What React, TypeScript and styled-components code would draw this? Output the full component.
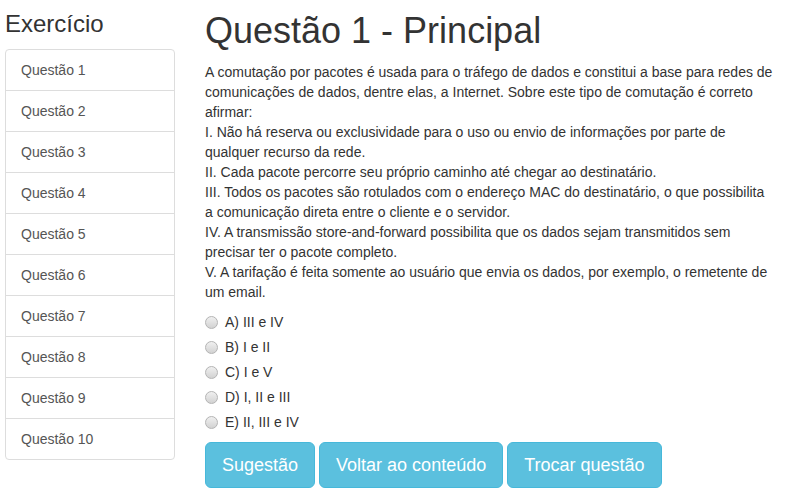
import styled, { createGlobalStyle } from "styled-components"

const GlobalStyle = createGlobalStyle`
  html, body {
    margin: 0;
    padding: 0;
    background: #fff;
  }
  body {
    font-family: 'Liberation Sans', Arial, sans-serif;
    font-size: 14px;
    line-height: 20px;
    color: #333;
  }
  * { box-sizing: border-box; }
`

const questions = Array.from({ length: 10 }, (_, i) => `Questão ${i + 1}`)

const options = ["A) III e IV", "B) I e II", "C) I e V", "D) I, II e III", "E) II, III e IV"]

const App = () => {
  return (
    <Page>
      <GlobalStyle />
      <Sidebar>
        <SideTitle>Exercício</SideTitle>
        <ListGroup>
          {questions.map((q) => (
            <ListItem key={q}>{q}</ListItem>
          ))}
        </ListGroup>
      </Sidebar>
      <Main>
        <Title>Questão 1 - Principal</Title>
        <Statement>
          A comutação por pacotes é usada para o tráfego de dados e constitui a base para redes de
          comunicações de dados, dentre elas, a Internet. Sobre este tipo de comutação é correto
          afirmar:
          <br />
          I. Não há reserva ou exclusividade para o uso ou envio de informações por parte de
          qualquer recurso da rede.
          <br />
          II. Cada pacote percorre seu próprio caminho até chegar ao destinatário.
          <br />
          III. Todos os pacotes são rotulados com o endereço MAC do destinatário, o que possibilita
          a comunicação direta entre o cliente e o servidor.
          <br />
          IV. A transmissão store-and-forward possibilita que os dados sejam transmitidos sem
          precisar ter o pacote completo.
          <br />
          V. A tarifação é feita somente ao usuário que envia os dados, por exemplo, o remetente de
          um email.
        </Statement>
        <Options>
          {options.map((o) => (
            <Option key={o}>
              <Radio />
              {o}
            </Option>
          ))}
        </Options>
        <Buttons>
          <Button>Sugestão</Button>
          <Button>Voltar ao conteúdo</Button>
          <Button>Trocar questão</Button>
        </Buttons>
      </Main>
    </Page>
  )
}

export default App

const Page = styled.div`
  display: flex;
  flex-direction: row;
  align-items: flex-start;
  padding: 0 0 0 5px;
  gap: 30px;
`

const Sidebar = styled.div`
  width: 170px;
  display: flex;
  flex-direction: column;
`

const SideTitle = styled.h3`
  font-size: 24px;
  line-height: 26px;
  font-weight: 400;
  margin: 11px 0 12px 0;
  color: #333;
`

const ListGroup = styled.div`
  border: 1px solid #ddd;
  border-radius: 4px;
  display: flex;
  flex-direction: column;
`

const ListItem = styled.div`
  padding: 10px 15px;
  color: #555;
  border-bottom: 1px solid #ddd;
  cursor: pointer;

  &:last-child {
    border-bottom: none;
  }
`

const Main = styled.div`
  width: 570px;
  display: flex;
  flex-direction: column;
`

const Title = styled.h1`
  font-size: 36px;
  line-height: 40px;
  font-weight: 400;
  margin: 11px 0 11px 0;
  color: #333;
`

const Statement = styled.p`
  margin: 0 0 10px 0;
`

const Options = styled.div`
  display: flex;
  flex-direction: column;
`

const Option = styled.label`
  height: 25px;
  display: flex;
  flex-direction: row;
  align-items: center;
  padding-bottom: 5px;
  gap: 7px;
  cursor: pointer;
`

const Radio = styled.span`
  width: 13px;
  height: 13px;
  border-radius: 50%;
  border: 1px solid #b4b4b4;
  background: linear-gradient(#f0f0f0, #d2d2d2);
  margin-left: 0;
`

const Buttons = styled.div`
  display: flex;
  flex-direction: row;
  gap: 4px;
  margin-top: 5px;
`

const Button = styled.div`
  padding: 10px 16px;
  font-size: 18px;
  line-height: 24px;
  color: #fff;
  background: #5bc0de;
  border: 1px solid #46b8da;
  border-radius: 6px;
  cursor: pointer;
`
